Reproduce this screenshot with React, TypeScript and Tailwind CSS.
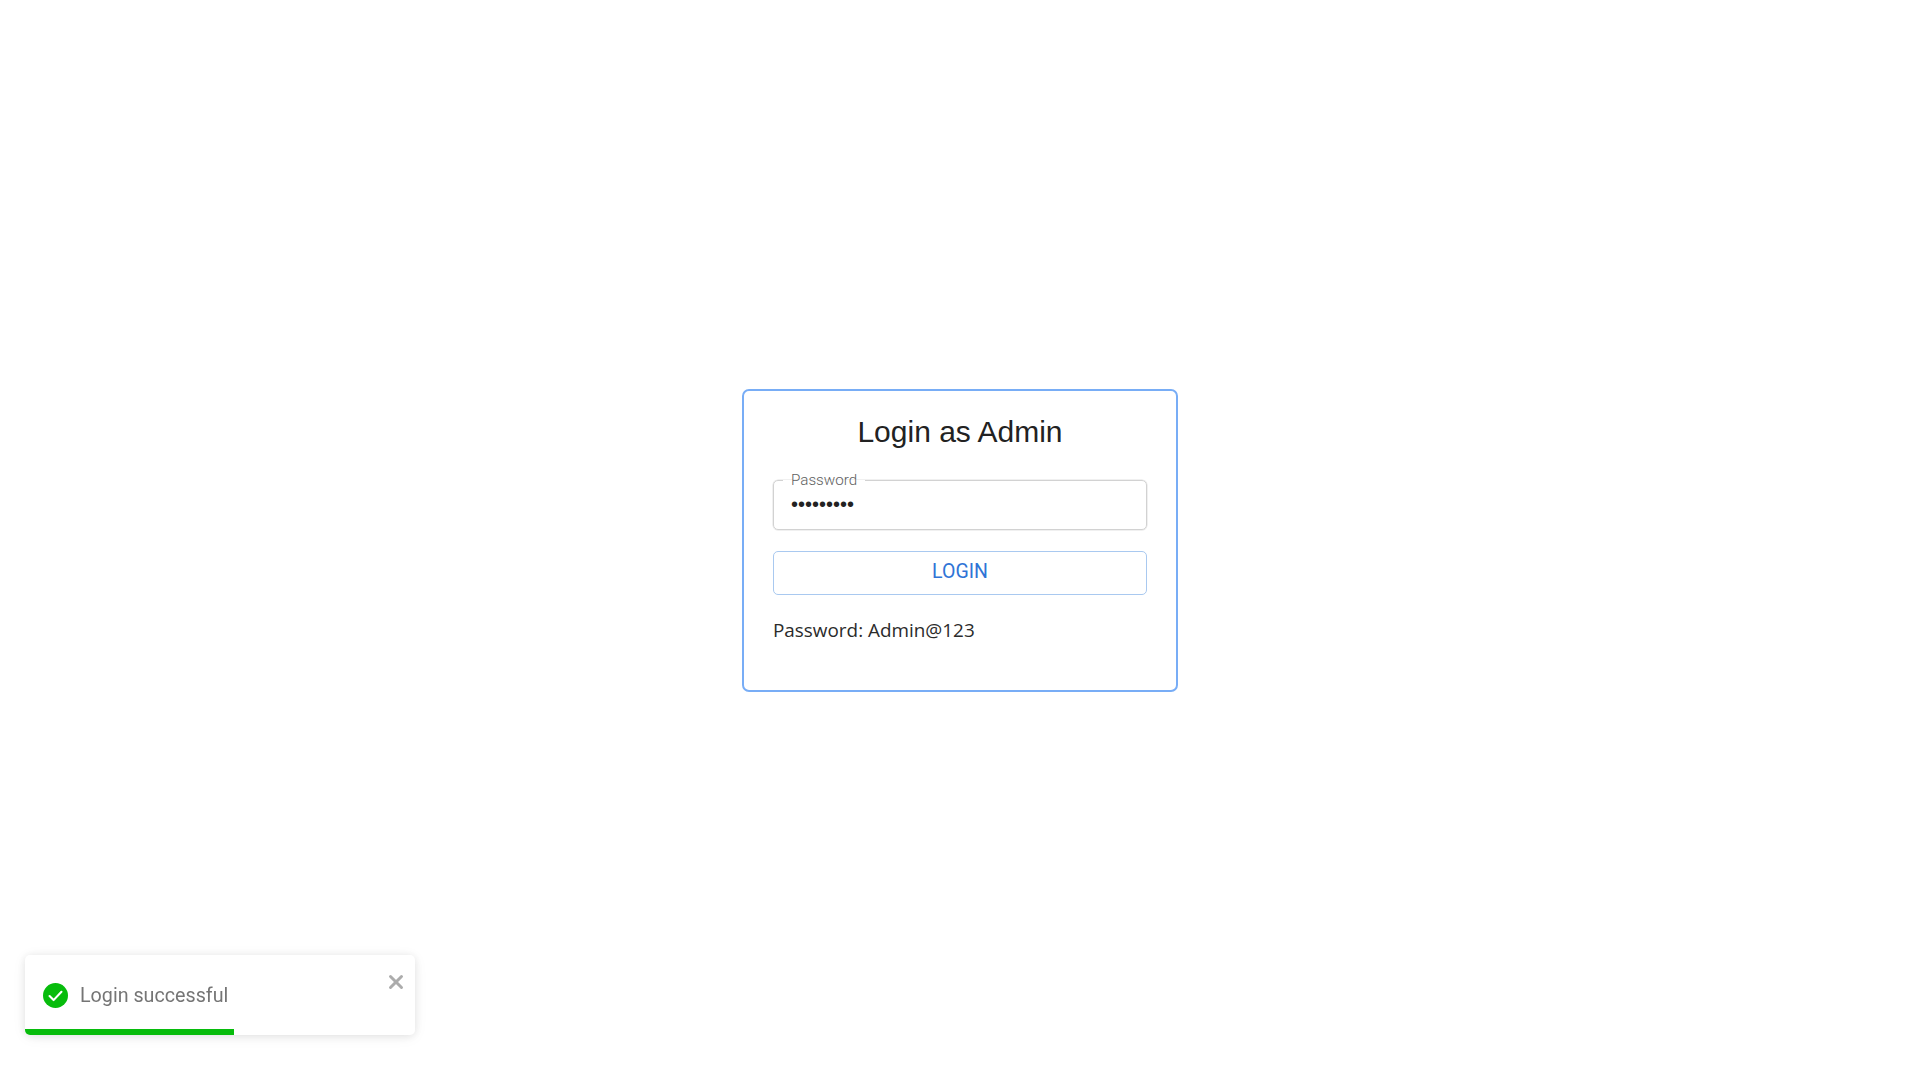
import { X } from "lucide-react";

export default function App() {
    return (
        <div className="min-h-screen bg-white flex items-center justify-center font-['Roboto',sans-serif]">
            {/* Login card */}
            <div className="w-[436px] h-[303px] border-2 border-[#78adf6] rounded-[7px] px-[29px] pt-[21px] bg-white">
                <h1 className="text-[30px] leading-[40px] text-center text-[#222222] font-['Liberation_Sans',sans-serif]">
                    Login as Admin
                </h1>

                <fieldset className="mt-[21px] h-[57px] border border-[#d2d2d2] rounded-[5px] px-[10px] shadow-[0_0_0_0.5px_#e2e2e2]">
                    <legend className="px-[8px] -ml-[1px] text-[15.2px] leading-[15px] font-light text-[#5f5f5f] font-['Roboto',sans-serif]">
                        Password
                    </legend>
                    <input
                        type="password"
                        readOnly
                        value="Admin@123"
                        className="block w-full h-[33px] px-[7px] outline-none text-[20px] text-[#222222] bg-transparent font-['Liberation_Sans',sans-serif]"
                    />
                </fieldset>

                <button className="mt-[21px] w-full h-[44px] border border-[#a9c9f0] rounded-[5px] pb-[1px] text-[19.5px] text-[#2f74d6] bg-white font-['Roboto',sans-serif]">
                    LOGIN
                </button>

                <p className="mt-[22px] text-[18.9px] leading-[26px] text-[#2b2b2b] font-['Open_Sans',sans-serif]">
                    Password: Admin@123
                </p>
            </div>

            {/* Toast */}
            <div className="fixed left-[25px] bottom-[45px] w-[390px] h-[80px] bg-white rounded-[5px] overflow-hidden shadow-[0_1px_10px_rgba(0,0,0,0.1),0_2px_15px_rgba(0,0,0,0.05)]">
                <div className="flex items-center h-[80px] pl-[18px] gap-[12px]">
                    <svg viewBox="0 0 26 26" className="w-[25px] h-[25px] shrink-0">
                        <circle cx="13" cy="13" r="13" fill="#07bc0c" />
                        <path d="M6.8 13.6l4.2 4.2 8.2-8.6" fill="none" stroke="#fff" strokeWidth="2.2" strokeLinecap="round" strokeLinejoin="round" />
                    </svg>
                    <span className="pt-[1px] text-[19.7px] text-[#757575] font-['Roboto',sans-serif]">Login successful</span>
                </div>
                <X className="absolute top-[16px] right-[8px] w-[22px] h-[22px] text-[#acacac]" strokeWidth={3.2} />
                <div className="absolute left-0 bottom-0 h-[6px] w-[209px] bg-[#07bc0c]" />
            </div>
        </div>
    );
}
